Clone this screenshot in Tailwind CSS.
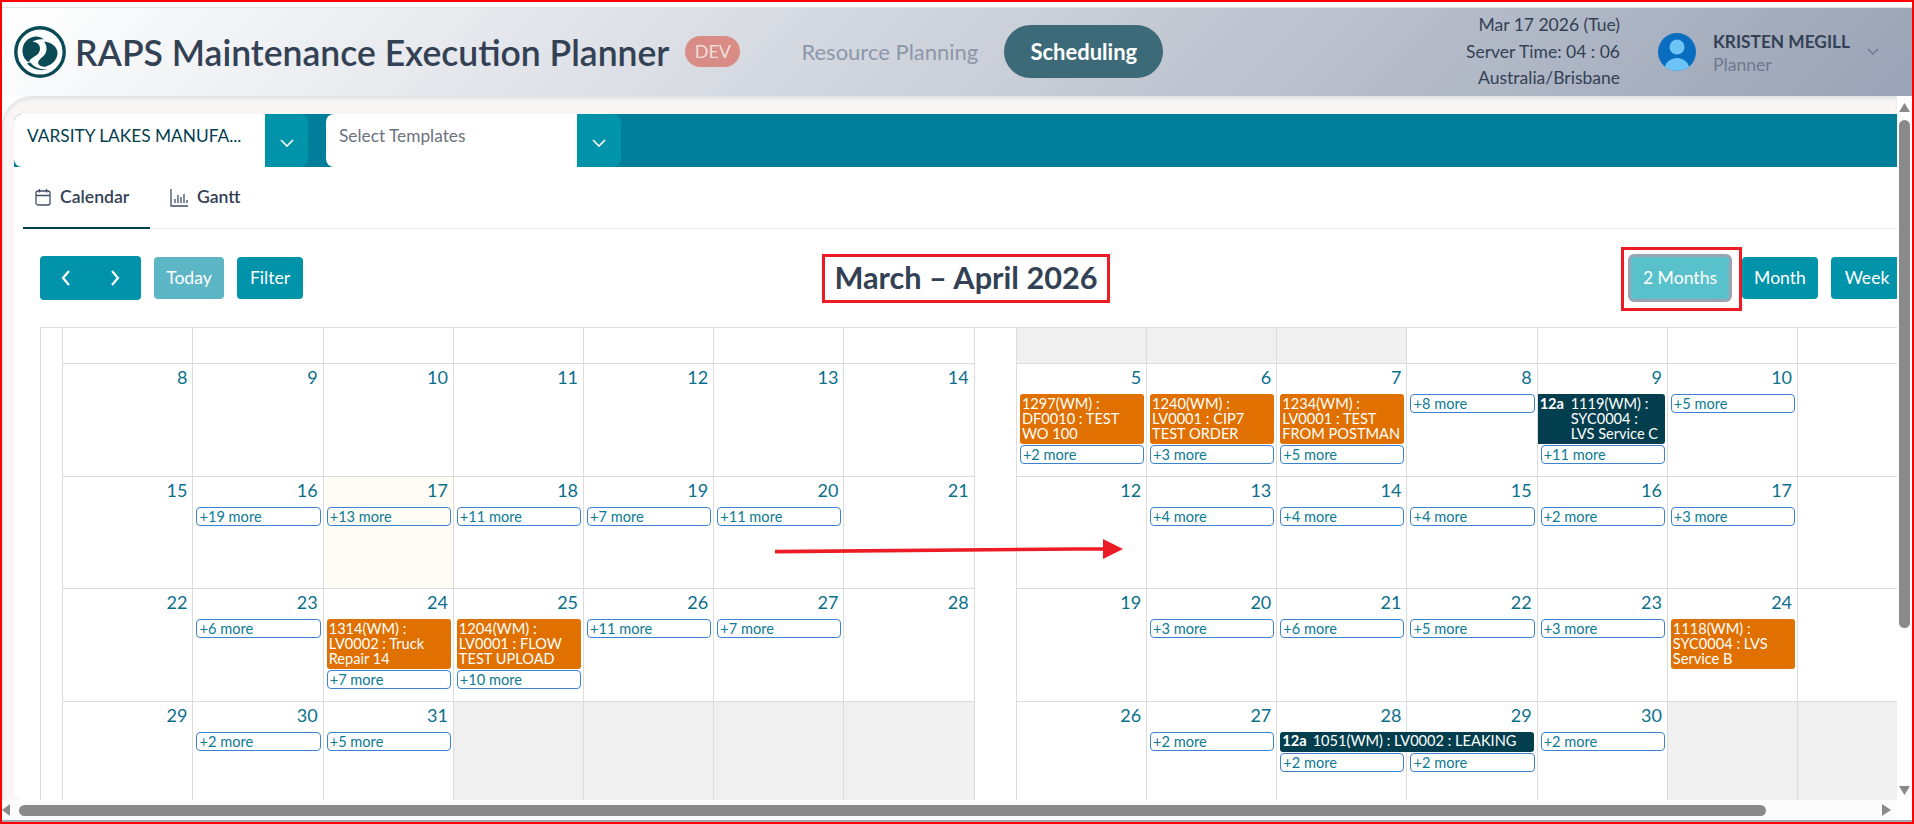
<!DOCTYPE html>
<html lang="en">
<head>
    <meta charset="UTF-8">
    <meta name="viewport" content="width=device-width, initial-scale=1.0">
    <title>RAPS Maintenance Execution Planner</title>
    <script src="https://cdn.jsdelivr.net/npm/@tailwindcss/browser@4"></script>
</head>
<body class="font-[Lato,sans-serif] bg-white">
<div class="w-[1914px] h-[824px] border-2 border-[#ff0000] bg-white flex flex-col overflow-hidden pt-[5px]">

    <!-- top header -->
    <header class="h-[89px] flex-none border-t border-[#e2e2e2] flex items-center bg-[linear-gradient(135deg,#ffffff_0%,#9aa3b5_100%)]">
        <svg class="ml-[12px] w-[52px] h-[52px] flex-none" viewBox="0 0 52 52">
            <circle cx="26" cy="26" r="24.2" fill="#fff" stroke="#0a4a54" stroke-width="3.4"/>
            <path fill="#0a4a54" d="M21 10.500C13 11.500 8 18 8.500 26C9 31 11.500 34.500 15 36.500C15.500 33 19 31.500 22 29.500C26 27 27 22 25 19C23.500 16.800 21 15.800 18.500 15.800C21.500 13.500 26 12.800 30 13.500C27.500 11.300 24.500 10.200 21 10.500Z"/>
            <path fill="#0a4a54" d="M30 15.500C33.500 20 33.500 26 29.500 30C26.500 33 23 35 24.500 38C26 40.500 29 41 32 40.500C38.500 38.500 43.500 33.500 43.500 27C43.500 21 37.500 16 30 15.500Z"/>
            <path fill="#0a4a54" d="M13 37.500C18 43 26 45.500 34 43.500C27 44 20 41.500 16.500 36.500Z"/>
        </svg>
        <h1 class="ml-[9px] mt-[2px] text-[35.500px] font-semibold text-[#334155] leading-none whitespace-nowrap">RAPS Maintenance Execution Planner</h1>
        <span class="ml-[16px] -mt-[1px] w-[55px] h-[31px] rounded-full bg-[#d98c86] text-[#f1dcda] text-[18px] flex items-center justify-center">DEV</span>
        <a class="ml-[61px] -mt-[2px] text-[22px] text-[#8b97ab]">Resource Planning</a>
        <a class="ml-[26px] -mt-[2px] w-[159px] h-[53px] rounded-full bg-[#3d6a78] text-white text-[22px] font-bold flex items-center justify-center">Scheduling</a>
        <div class="ml-auto text-right text-[17.500px] leading-[26.500px] text-[#334155] whitespace-nowrap">
            <div>Mar 17 2026 (Tue)</div>
            <div>Server Time: 04 : 06</div>
            <div>Australia/Brisbane</div>
        </div>
        <svg class="ml-[38px] w-[38px] h-[38px] flex-none" viewBox="0 0 38 38">
            <defs><clipPath id="av"><circle cx="19" cy="19" r="19"/></clipPath></defs>
            <circle cx="19" cy="19" r="19" fill="#0a6ec0"/>
            <circle cx="19" cy="14" r="7.500" fill="#6cc4f6"/>
            <ellipse cx="19" cy="37" rx="12.500" ry="12" fill="#6cc4f6" clip-path="url(#av)"/>
        </svg>
        <div class="ml-[17px] mt-[2px] flex flex-col">
            <span class="text-[17.300px] leading-[23px] font-bold text-[#334155] whitespace-nowrap">KRISTEN MEGILL</span>
            <span class="text-[17.600px] leading-[23px] text-[#6b7a90]">Planner</span>
        </div>
        <svg class="ml-[16px] mr-[32px] w-[14px] h-[10px] flex-none" viewBox="0 0 14 10" fill="none" stroke="#6b7a90" stroke-width="1.500"><path d="M2 2l5 5 5-5"/></svg>
    </header>

    <main class="flex-1 min-h-0 flex border-b-2 border-[#a0a8b8]">
        <div class="w-[1895px] flex-none flex flex-col min-w-0">
            <div class="flex-1 min-h-0 overflow-hidden bg-[#f8f5f4] rounded-tl-[30px] border-t border-l border-[#e0e4ea] shadow-[inset_0_3px_3px_#e9e9e9] pl-[11px] pt-[17px]">

                <!-- site and template selects -->
                <div class="h-[53px] bg-[#017e99] rounded-tl-[8px] flex text-[17.300px] leading-[22px]">
                    <div class="w-[251px] bg-white rounded-l-[8px] pl-[13px] pt-[11px] text-[#033e4e] whitespace-nowrap">VARSITY LAKES MANUFA...</div>
                    <div class="w-[43px] bg-[#0193a9] rounded-r-[8px] flex items-center justify-center pt-[4px]">
                        <svg class="w-[16px] h-[12px]" viewBox="0 0 16 12" fill="none" stroke="#fff" stroke-width="1.600"><path d="M2 3l6 6 6-6"/></svg>
                    </div>
                    <div class="ml-[18px] w-[251px] bg-white rounded-l-[8px] pl-[13px] pt-[11px] text-[#6b7280]">Select Templates</div>
                    <div class="w-[44px] bg-[#0193a9] rounded-r-[8px] flex items-center justify-center pt-[4px]">
                        <svg class="w-[16px] h-[12px]" viewBox="0 0 16 12" fill="none" stroke="#fff" stroke-width="1.600"><path d="M2 3l6 6 6-6"/></svg>
                    </div>
                </div>

                <div class="h-[633px] bg-white rounded-bl-[8px] pl-[9px]">
                    <!-- tabs -->
                    <div class="h-[62px] border-b border-[#e2e8f0] flex text-[17.600px] font-semibold text-[#334155]">
                        <div class="w-[127px] h-[62px] border-b-2 border-[#033e4e] flex items-center pl-[12px]">
                            <svg class="w-[16px] h-[18px] flex-none" viewBox="0 0 16 18" fill="none" stroke="#3f4f66" stroke-width="1.300"><rect x="1" y="3" width="14" height="14" rx="2"/><path d="M1 7.500h14M4.500 1v3.500M11.500 1v3.500"/></svg>
                            <span class="ml-[9px]">Calendar</span>
                        </div>
                        <div class="ml-[20px] h-[61px] flex items-center">
                            <svg class="w-[18px] h-[18px] flex-none" viewBox="0 0 18 18" fill="none" stroke="#3f4f66" stroke-width="1.300"><path d="M1 0v17h17M5 14v-4M8 14V6M11 14v-6M14 14V5M17 14v-3"/></svg>
                            <span class="ml-[9px]">Gantt</span>
                        </div>
                    </div>

                    <div class="pl-[17px]">
                        <!-- calendar toolbar -->
                        <div class="h-[98px] flex items-center text-[17.600px] text-white">
                            <div class="w-[782px] flex-none flex items-center">
                                <div class="w-[101px] h-[44px] rounded-[4px] bg-[#0193a9] flex items-center justify-between px-[20px]">
                                    <svg class="w-[12px] h-[20px]" viewBox="0 0 12 20" fill="none" stroke="#fff" stroke-width="2.200"><path d="M9 3l-6 7 6 7"/></svg>
                                    <svg class="w-[12px] h-[20px]" viewBox="0 0 12 20" fill="none" stroke="#fff" stroke-width="2.200"><path d="M3 3l6 7-6 7"/></svg>
                                </div>
                                <div class="ml-[13px] w-[70px] h-[42px] rounded-[4px] bg-[#5cb6c6] flex items-center justify-center">Today</div>
                                <div class="ml-[13px] w-[66px] h-[42px] rounded-[4px] bg-[#0193a9] flex items-center justify-center">Filter</div>
                            </div>
                            <h2 class="w-[288px] h-[49px] flex-none border-[3px] border-[#ed1c24] flex items-center justify-center text-[30.700px] font-bold text-[#334155] whitespace-nowrap">March – April 2026</h2>
                            <div class="ml-[518px] flex-none flex items-center">
                                <div class="relative w-[104px] h-[48px] rounded-[6px] border-[3px] border-[#9aa5b1] bg-[#59c1cc] flex items-center justify-center">
                                    2 Months
                                    <div class="absolute -left-[10px] -right-[13px] -top-[10px] -bottom-[12px] border-[3px] border-[#ed1c24]"></div>
                                </div>
                                <div class="ml-[10px] w-[76px] h-[42px] rounded-[4px] bg-[#0193a9] flex items-center justify-center">Month</div>
                                <div class="ml-[13px] w-[72px] h-[42px] rounded-[4px] bg-[#0193a9] flex items-center justify-center">Week</div>
                            </div>
                        </div>

                        <!-- two month grid -->
                        <div class="relative grid grid-cols-[22.300px_repeat(7,130.200px)_42.300px_repeat(7,130.200px)] grid-rows-[36px_113px_112px_113px_120px] [&>div]:border-l [&>div]:border-t [&>div]:border-[#dcdcdc] [&_p]:h-[30px] [&_p]:pt-[2px] [&_p]:pr-[5px] [&_p]:text-right [&_p]:text-[18px] [&_p]:leading-[22px] [&_p]:text-[#0b6f8c] [&_a]:block [&_a]:h-[19px] [&_a]:ml-[3px] [&_a]:mr-[2px] [&_a]:mb-[1px] [&_a]:rounded-[4px] [&_a]:border [&_a]:border-[#3b82d0] [&_a]:pl-[2px] [&_a]:text-[14.600px] [&_a]:leading-[17px] [&_a]:text-[#0e7a94]">
                            <div class="row-span-5"></div>
                            <div></div><div></div><div></div><div></div><div></div><div></div><div></div>
                            <div class="row-span-5"></div>
                            <div class="bg-[#f0f0f0]"></div><div class="bg-[#f0f0f0]"></div><div class="bg-[#f0f0f0]"></div><div></div><div></div><div></div><div></div>

                            <div><p>8</p></div><div><p>9</p></div><div><p>10</p></div><div><p>11</p></div><div><p>12</p></div><div><p>13</p></div><div><p>14</p></div>
                            <div><p>5</p>
                                <div class="ml-[3px] mr-[2px] mb-[1px] h-[50px] rounded-[3px] bg-[#e07000] text-white text-[14.600px] leading-[15px] px-[2px] pt-[2px]">1297(WM) : DF0010 : TEST WO 100</div>
                                <a>+2 more</a></div>
                            <div><p>6</p>
                                <div class="ml-[3px] mr-[2px] mb-[1px] h-[50px] rounded-[3px] bg-[#e07000] text-white text-[14.600px] leading-[15px] px-[2px] pt-[2px]">1240(WM) : LV0001 : CIP7 TEST ORDER</div>
                                <a>+3 more</a></div>
                            <div><p>7</p>
                                <div class="ml-[3px] mr-[2px] mb-[1px] h-[50px] rounded-[3px] bg-[#e07000] text-white text-[14.600px] leading-[15px] px-[2px] pt-[2px]">1234(WM) : LV0001 : TEST FROM POSTMAN</div>
                                <a>+5 more</a></div>
                            <div><p>8</p><a>+8 more</a></div>
                            <div><p>9</p>
                                <div class="mr-[2px] mb-[1px] h-[50px] rounded-r-[3px] bg-[#023e4d] text-white text-[14.600px] leading-[15px] pl-[2px] pr-[2px] pt-[2px] flex">
                                    <b class="w-[31px] flex-none">12a</b><span>1119(WM) :<br>SYC0004 :<br>LVS Service C</span>
                                </div>
                                <a>+11 more</a></div>
                            <div><p>10</p><a>+5 more</a></div>
                            <div></div>

                            <div><p>15</p></div><div><p>16</p><a>+19 more</a></div><div class="bg-[#fffcf5]"><p>17</p><a>+13 more</a></div><div><p>18</p><a>+11 more</a></div><div><p>19</p><a>+7 more</a></div><div><p>20</p><a>+11 more</a></div><div><p>21</p></div>
                            <div><p>12</p></div><div><p>13</p><a>+4 more</a></div><div><p>14</p><a>+4 more</a></div><div><p>15</p><a>+4 more</a></div><div><p>16</p><a>+2 more</a></div><div><p>17</p><a>+3 more</a></div><div></div>

                            <div><p>22</p></div><div><p>23</p><a>+6 more</a></div>
                            <div><p>24</p>
                                <div class="ml-[3px] mr-[2px] mb-[1px] h-[50px] rounded-[3px] bg-[#e07000] text-white text-[14.600px] leading-[15px] px-[2px] pt-[2px]">1314(WM) : LV0002 : Truck Repair 14</div>
                                <a>+7 more</a></div>
                            <div><p>25</p>
                                <div class="ml-[3px] mr-[2px] mb-[1px] h-[50px] rounded-[3px] bg-[#e07000] text-white text-[14.600px] leading-[15px] px-[2px] pt-[2px]">1204(WM) : LV0001 : FLOW TEST UPLOAD</div>
                                <a>+10 more</a></div>
                            <div><p>26</p><a>+11 more</a></div><div><p>27</p><a>+7 more</a></div><div><p>28</p></div>
                            <div><p>19</p></div><div><p>20</p><a>+3 more</a></div><div><p>21</p><a>+6 more</a></div><div><p>22</p><a>+5 more</a></div><div><p>23</p><a>+3 more</a></div>
                            <div><p>24</p>
                                <div class="ml-[3px] mr-[2px] mb-[1px] h-[50px] rounded-[3px] bg-[#e07000] text-white text-[14.600px] leading-[15px] px-[2px] pt-[2px]">1118(WM) : SYC0004 : LVS Service B</div>
                            </div>
                            <div></div>

                            <div><p>29</p></div><div><p>30</p><a>+2 more</a></div><div><p>31</p><a>+5 more</a></div><div class="bg-[#f0f0f0]"></div><div class="bg-[#f0f0f0]"></div><div class="bg-[#f0f0f0]"></div><div class="bg-[#f0f0f0]"></div>
                            <div><p>26</p></div><div><p>27</p><a>+2 more</a></div>
                            <div><p>28</p>
                                <div class="relative z-10 w-[254px] ml-[3px] mb-[1px] h-[20px] rounded-[3px] bg-[#023e4d] text-white text-[14.600px] leading-[18px] px-[2px] whitespace-nowrap"><b class="mr-[6px]">12a</b>1051(WM) : LV0002 : LEAKING</div>
                                <a>+2 more</a></div>
                            <div><p>29</p><div class="h-[21px]"></div><a>+2 more</a></div>
                            <div><p>30</p><a>+2 more</a></div>
                            <div class="bg-[#f0f0f0]"></div><div class="bg-[#f0f0f0]"></div>

                            <!-- annotation arrow -->
                            <svg class="absolute left-[735px] top-[212px] z-20 w-[348px] h-[20px]" viewBox="0 0 348 20"><path fill="#ed1c24" d="M0 10.800L328 8V11.500L0 14.500ZM328 0L348 10L328 20Z"/></svg>
                        </div>
                    </div>
                </div>
            </div>

            <!-- horizontal scrollbar -->
            <div class="h-[20px] flex-none bg-[#fcfcfc] flex items-center relative">
                <svg class="ml-0 w-[8px] h-[12px] flex-none" viewBox="0 0 8 12"><path fill="#8a8a8a" d="M8 0v12L0 6z"/></svg>
                <div class="ml-[9px] w-[1747px] h-[11px] rounded-full bg-[#8a8a8a]"></div>
                <svg class="ml-auto mr-[6px] w-[9px] h-[12px] flex-none" viewBox="0 0 9 12"><path fill="#8a8a8a" d="M0 0v12l9-6z"/></svg>
            </div>
        </div>

        <!-- vertical scrollbar -->
        <div class="w-[15px] flex-none bg-white flex flex-col items-center">
            <svg class="mt-[7px] w-[11px] h-[9px] flex-none" viewBox="0 0 11 9"><path fill="#8a8a8a" d="M5.500 0L11 9H0z"/></svg>
            <div class="mt-[8px] w-[11px] h-[508px] rounded-full bg-[#8a8a8a]"></div>
            <svg class="mt-auto mb-[25px] w-[11px] h-[9px] flex-none" viewBox="0 0 11 9"><path fill="#8a8a8a" d="M0 0h11L5.500 9z"/></svg>
        </div>
    </main>
</div>
</body>
</html>
